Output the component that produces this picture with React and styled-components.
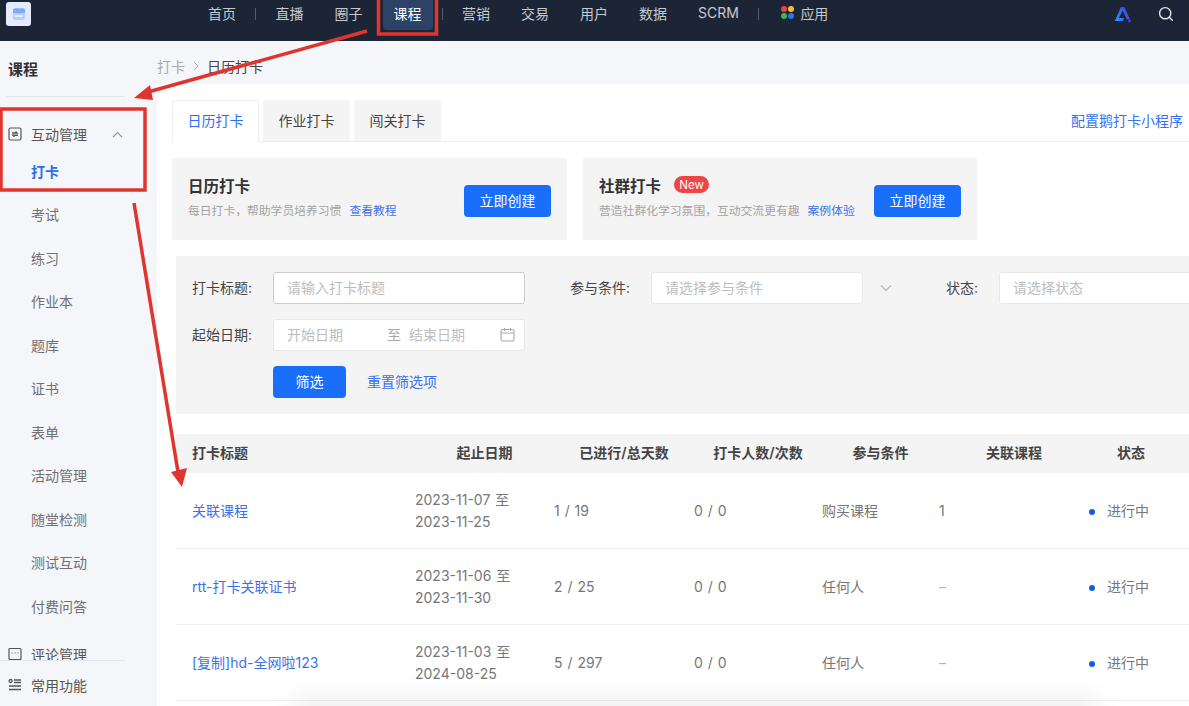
import React from "react";
import styled, { createGlobalStyle } from "styled-components";

const GlobalStyle = createGlobalStyle`
  html, body {
    margin: 0;
    padding: 0;
    width: 1189px;
    height: 706px;
    overflow: hidden;
    background: #fff;
    font-family: Inter, "Noto Sans CJK SC", sans-serif;
    font-size: 14px;
    color: #333;
  }
  * { box-sizing: border-box; }
`;

const Page = styled.div`
  position: relative;
  width: 1189px;
  height: 706px;
  overflow: hidden;
  display: flex;
  flex-direction: column;
`;

const TopBar = styled.header`
  height: 41px;
  flex: none;
  background: #1c2536;
  display: flex;
  align-items: flex-start;
  padding-left: 6px;
`;

const Logo = styled.div`
  width: 25px;
  height: 24px;
  margin-top: 2px;
  border-radius: 3px;
  background: #e3ebfd;
  display: flex;
  align-items: center;
  justify-content: center;
`;

const Nav = styled.nav`
  display: flex;
  align-items: flex-start;
  margin-left: 161.5px;
  flex: 1;
`;

const NavItem = styled.a`
  height: 30px;
  padding: 0 ${(p) => (p.$active ? "11px" : "15.5px")} 5px;
  margin: 0 ${(p) => (p.$active ? "5.5px" : "0")} 0 ${(p) => (p.$active ? "4.5px" : "0")};
  font-size: 14px;
  color: ${(p) => (p.$active ? "#fff" : "#c6c9cf")};
  background: ${(p) => (p.$active ? "#2c4267" : "transparent")};
  border-radius: 0 0 4px 4px;
  display: flex;
  align-items: center;
  gap: 6px;
  white-space: nowrap;
`;

const NavDivider = styled.span`
  width: 1px;
  height: 12px;
  margin: 8px ${(p) => (p.$wide ? "7px" : "4px")} 0 3.5px;
  background: #565e6c;
`;

const TopIcons = styled.div`
  display: flex;
  align-items: center;
  gap: 26px;
  height: 28px;
  padding-right: 15px;
`;

const Body = styled.div`
  flex: 1;
  display: flex;
  min-height: 0;
`;

const Sidebar = styled.aside`
  width: 157px;
  flex: none;
  background: #f5f6fa;
  display: flex;
  flex-direction: column;
`;

const SideTitle = styled.div`
  height: 56px;
  margin: 0 32px 0 6px;
  padding-left: 2px;
  border-bottom: 1px solid #e6e7eb;
  display: flex;
  align-items: center;
  font-size: 15px;
  font-weight: 600;
  color: #333;
`;

const SideScroll = styled.div`
  flex: 1;
  min-height: 0;
  overflow: hidden;
  padding-top: 23px;
`;

const GroupRow = styled.div`
  height: 30px;
  margin-top: ${(p) => p.$gap || 0}px;
  padding: 0 0 2px 8px;
  display: flex;
  align-items: center;
  gap: 9px;
  color: #555;
`;

const Chevron = styled.svg`
  margin-left: 16px;
`;

const SubItem = styled.div`
  height: 43.5px;
  padding: 0 0 2px 31px;
  display: flex;
  align-items: center;
  color: ${(p) => (p.$active ? "#2b6ff0" : "#707070")};
  font-weight: ${(p) => (p.$active ? 600 : 400)};
`;

const SideFooter = styled.div`
  height: 46px;
  flex: none;
  margin-right: 32px;
  padding: 2px 0 0 8px;
  border-top: 1px solid #e6e7eb;
  display: flex;
  align-items: center;
  gap: 9px;
  color: #555;
`;

const Content = styled.main`
  flex: 1;
  min-width: 0;
  display: flex;
  flex-direction: column;
  overflow: hidden;
`;

const Crumbs = styled.div`
  height: 43px;
  flex: none;
  background: #f5f6fa;
  display: flex;
  align-items: center;
  padding-top: 7px;
  gap: 7px;
  color: #aaa;
`;

const CrumbNow = styled.span`
  color: #444;
`;

const Panel = styled.div`
  flex: 1;
  background: #fff;
  padding: 16px 0 0 15px;
`;

const TabBar = styled.div`
  height: 42px;
  display: flex;
  gap: 4px;
  border-bottom: 1px solid #eeeeee;
`;

const Tab = styled.div`
  width: 87px;
  height: ${(p) => (p.$active ? "42px" : "41px")};
  padding-bottom: 2px;
  border-radius: 3px 3px 0 0;
  border: 1px solid ${(p) => (p.$active ? "#eeeeee" : "#f4f4f4")};
  border-bottom: ${(p) => (p.$active ? "1px solid #fff" : "none")};
  background: ${(p) => (p.$active ? "#fff" : "#f4f4f4")};
  color: ${(p) => (p.$active ? "#2b6ff0" : "#444")};
  display: flex;
  align-items: center;
  justify-content: center;
`;

const MiniLink = styled.a`
  margin: 0 6px 2px auto;
  align-self: center;
  color: #3a72ec;
`;

const Cards = styled.div`
  display: flex;
  gap: 16px;
  margin-top: 16px;
`;

const Card = styled.div`
  width: ${(p) => p.$w}px;
  height: 82px;
  background: #f4f4f4;
  padding: 0 16px;
  display: flex;
  align-items: center;
  justify-content: space-between;
`;

const CardText = styled.div`
  margin-bottom: 6px;
`;

const CardTitle = styled.div`
  display: flex;
  align-items: center;
  gap: 13px;
  height: 20px;
  font-size: 15.5px;
  font-weight: 600;
  color: #333;
`;

const Badge = styled.span`
  width: 35px;
  height: 17px;
  border-radius: 9px;
  background: #ee4545;
  color: #fff;
  font-size: 11.5px;
  font-weight: 400;
  display: flex;
  align-items: center;
  justify-content: center;
`;

const CardDesc = styled.div`
  margin-top: 6px;
  font-size: 11.8px;
  color: #a3a3a3;
  display: flex;
  gap: 8px;
  white-space: nowrap;
`;

const SmallLink = styled.a`
  color: #3a72ec;
`;

const Button = styled.button`
  width: ${(p) => p.$w}px;
  height: 32px;
  border: 0;
  border-radius: 4px;
  background: #1a6ffa;
  color: #fff;
  font: inherit;
  font-size: 14px;
  padding: 0 0 2px;
`;

const CardButton = styled(Button)`
  margin-top: 4px;
`;

const Filter = styled.section`
  margin: 16px 0 0 4px;
  height: 158px;
  background: #f4f4f4;
  padding: 16px 0 0 16px;
  overflow: hidden;
`;

const FilterRow = styled.div`
  display: flex;
  align-items: center;
  height: 32px;
  margin-bottom: 15px;
`;

const Label = styled.span`
  width: ${(p) => p.$w}px;
  margin-left: ${(p) => p.$gap || 0}px;
  margin-bottom: 2px;
  flex: none;
  color: #444;
  white-space: nowrap;
`;

const Field = styled.div`
  width: ${(p) => p.$w}px;
  flex: none;
  height: 32px;
  background: #fff;
  border: 1px solid ${(p) => (p.$strong ? "#cccccc" : "#e8e8e8")};
  border-radius: 3px;
  padding: 0 12px 3px 13px;
  display: flex;
  align-items: center;
  color: #bdbdbd;
  white-space: nowrap;
`;

const RangeTo = styled.span`
  margin: 0 8px 0 44px;
  color: #a8a8a8;
`;

const FieldIcon = styled.svg`
  margin: 2px -3px 0 auto;
`;

const Arrow = styled.svg`
  margin: 0 54px 0 17px;
  flex: none;
`;

const FilterActions = styled.div`
  display: flex;
  align-items: center;
  height: 32px;
  margin: 1px 0 0 81px;
  gap: 21px;
`;

const TextLink = styled.a`
  margin-bottom: 3px;
  color: #3a72ec;
`;

const Table = styled.section`
  margin: 20px 0 0 4px;
`;

const Row = styled.div`
  display: grid;
  grid-template-columns: 223px 139px 140px 128px 117px 150px 100px;
  align-items: center;
  height: ${(p) => (p.$head ? "39px" : "76px")};
  background: ${(p) => (p.$head ? "#f4f4f4" : "#fff")};
  border-bottom: ${(p) => (p.$head ? "none" : "1px solid #eeeeee")};
`;

const HeadCell = styled.div`
  padding: 0 0 3px ${(p) => (p.$edge ? "16px" : "32px")};
  font-weight: 600;
  color: #444;
  white-space: nowrap;
  text-align: ${(p) => (p.$left ? "left" : "center")};
`;

const Cell = styled.div`
  padding-left: 16px;
  color: ${(p) => (p.$muted ? "#b5b5b5" : "#777")};
  line-height: 22px;
  white-space: nowrap;
  word-spacing: 1px;
`;

const TitleLink = styled.a`
  color: #3a72ec;
  word-spacing: 0;
`;

const Status = styled.div`
  padding: 0 0 1px 16px;
  display: flex;
  align-items: center;
  gap: 12px;
  color: #777;
  white-space: nowrap;
`;

const Dot = styled.i`
  width: 6px;
  height: 6px;
  border-radius: 50%;
  background: #1658ee;
  margin-top: 3px;
`;

const FloatingShadow = styled.div`
  position: absolute;
  left: 300px;
  bottom: -14px;
  width: 790px;
  height: 14px;
  box-shadow: 0 0 28px 8px rgba(0, 0, 0, 0.07);
`;

const Annotations = styled.svg`
  position: absolute;
  left: 0;
  top: 0;
  pointer-events: none;
`;

const subItems = ["考试", "练习", "作业本", "题库", "证书", "表单", "活动管理", "随堂检测", "测试互动", "付费问答"];

const rows = [
  { title: "关联课程", from: "2023-11-07 至", to: "2023-11-25", days: "1 / 19", cond: "购买课程", course: "1" },
  { title: "rtt-打卡关联证书", from: "2023-11-06 至", to: "2023-11-30", days: "2 / 25", cond: "任何人", course: "–" },
  { title: "[复制]hd-全网啦123", from: "2023-11-03 至", to: "2024-08-25", days: "5 / 297", cond: "任何人", course: "–" },
];

function NavLinks() {
  return (
    <Nav>
      <NavItem>首页</NavItem>
      <NavDivider />
      <NavItem>直播</NavItem>
      <NavItem>圈子</NavItem>
      <NavItem $active>课程</NavItem>
      <NavDivider />
      <NavItem>营销</NavItem>
      <NavItem>交易</NavItem>
      <NavItem>用户</NavItem>
      <NavItem>数据</NavItem>
      <NavItem>SCRM</NavItem>
      <NavDivider $wide />
      <NavItem>
        <svg width="13" height="13" viewBox="0 0 13 13">
          <circle cx="3" cy="3" r="3" fill="#e8483a" />
          <circle cx="10" cy="3" r="3" fill="#f6c02c" />
          <circle cx="3" cy="10" r="3" fill="#3fb45a" />
          <circle cx="10" cy="10" r="3" fill="#2f74ec" />
        </svg>
        应用
      </NavItem>
    </Nav>
  );
}

export default function App() {
  return (
    <Page>
      <GlobalStyle />
      <TopBar>
        <Logo>
          <svg width="16" height="16" viewBox="0 0 16 16">
            <rect x="2" y="2" width="12" height="12" rx="2" fill="#b5cefc" />
            <path d="M2 4.5a2 2 0 0 1 2-2h8a2 2 0 0 1 2 2V7H2z" fill="#7fa9f5" />
            <rect x="4" y="9" width="8" height="2" fill="#e3ebfd" />
          </svg>
        </Logo>
        <NavLinks />
        <TopIcons>
          <svg width="18" height="17" viewBox="0 0 18 17">
            <defs>
              <linearGradient id="brand" x1="0" y1="1" x2="1" y2="0.4">
                <stop offset="0" stopColor="#2a9bf5" />
                <stop offset="0.55" stopColor="#2f6cf0" />
                <stop offset="1" stopColor="#5a35d8" />
              </linearGradient>
            </defs>
            <path d="M7 1h3.4L16 13.2h-3.2L8.7 4.6 4.8 12h5.4l-1.2 3H.8z" fill="url(#brand)" />
            <circle cx="15.4" cy="15" r="1.5" fill="#5a35d8" />
          </svg>
          <svg width="16" height="16" viewBox="0 0 16 16" fill="none" stroke="#e6e8ec" strokeWidth="1.4">
            <circle cx="7.2" cy="7.2" r="5.6" />
            <path d="M11.3 11.3l3 3" strokeLinecap="round" />
          </svg>
        </TopIcons>
      </TopBar>
      <Body>
        <Sidebar>
          <SideTitle>课程</SideTitle>
          <SideScroll>
            <GroupRow>
              <svg width="14" height="14" viewBox="0 0 14 14" fill="none" stroke="#555" strokeWidth="1.2">
                <rect x="1" y="1" width="12" height="12" rx="1.5" />
                <path d="M4 6h5l-1.5-1.6M10 8.2H5l1.5 1.6" strokeWidth="1.5" />
              </svg>
              互动管理
              <Chevron width="11" height="7" viewBox="0 0 11 7" fill="none" stroke="#999" strokeWidth="1.1">
                <path d="M1 6l4.5-4.5L10 6" />
              </Chevron>
            </GroupRow>
            <SubItem $active>打卡</SubItem>
            {subItems.map((name) => (
              <SubItem key={name}>{name}</SubItem>
            ))}
            <GroupRow $gap={11.5}>
              <svg width="14" height="14" viewBox="0 0 14 14" fill="none" stroke="#555" strokeWidth="1.2">
                <rect x="1" y="1.5" width="12" height="11" rx="1" />
                <path d="M3.5 6h1M6.5 6h1M9.5 6h1" />
              </svg>
              评论管理
            </GroupRow>
          </SideScroll>
          <SideFooter>
            <svg width="14" height="14" viewBox="0 0 14 14" fill="none" stroke="#555" strokeWidth="1.3">
              <circle cx="2.6" cy="3" r="1.5" />
              <path d="M6 2h7M6 4.5h7M1 8h12M1 11.5h12" />
            </svg>
            常用功能
          </SideFooter>
        </Sidebar>
        <Content>
          <Crumbs>
            <span>打卡</span>
            <svg width="8" height="10" viewBox="0 0 8 10" fill="none" stroke="#aaa" strokeWidth="1">
              <path d="M2 1l4 4-4 4" />
            </svg>
            <CrumbNow>日历打卡</CrumbNow>
          </Crumbs>
          <Panel>
            <TabBar>
              <Tab $active>日历打卡</Tab>
              <Tab>作业打卡</Tab>
              <Tab>闯关打卡</Tab>
              <MiniLink>配置鹅打卡小程序</MiniLink>
            </TabBar>
            <Cards>
              <Card $w={395}>
                <CardText>
                  <CardTitle>日历打卡</CardTitle>
                  <CardDesc>
                    每日打卡，帮助学员培养习惯
                    <SmallLink>查看教程</SmallLink>
                  </CardDesc>
                </CardText>
                <CardButton $w={87}>立即创建</CardButton>
              </Card>
              <Card $w={394}>
                <CardText>
                  <CardTitle>
                    社群打卡
                    <Badge>New</Badge>
                  </CardTitle>
                  <CardDesc>
                    营造社群化学习氛围，互动交流更有趣
                    <SmallLink>案例体验</SmallLink>
                  </CardDesc>
                </CardText>
                <CardButton $w={87}>立即创建</CardButton>
              </Card>
            </Cards>
            <Filter>
              <FilterRow>
                <Label $w={81}>打卡标题:</Label>
                <Field $w={252} $strong>请输入打卡标题</Field>
                <Label $w={81} $gap={45}>参与条件:</Label>
                <Field $w={212}>请选择参与条件</Field>
                <Arrow width="12" height="8" viewBox="0 0 12 8" fill="none" stroke="#b5b5b5" strokeWidth="1.2">
                  <path d="M1 1.5l5 5 5-5" />
                </Arrow>
                <Label $w={53}>状态:</Label>
                <Field $w={240}>请选择状态</Field>
              </FilterRow>
              <FilterRow>
                <Label $w={81}>起始日期:</Label>
                <Field $w={252}>
                  开始日期
                  <RangeTo>至</RangeTo>
                  结束日期
                  <FieldIcon width="15" height="15" viewBox="0 0 15 15" fill="none" stroke="#a8a8a8" strokeWidth="1.1">
                    <rect x="1" y="2.5" width="13" height="11.5" rx="1.5" />
                    <path d="M1 6h13M4.5 1v3M10.5 1v3" />
                  </FieldIcon>
                </Field>
              </FilterRow>
              <FilterActions>
                <Button $w={73}>筛选</Button>
                <TextLink>重置筛选项</TextLink>
              </FilterActions>
            </Filter>
            <Table>
              <Row $head>
                <HeadCell $left $edge>打卡标题</HeadCell>
                <HeadCell>起止日期</HeadCell>
                <HeadCell>已进行/总天数</HeadCell>
                <HeadCell>打卡人数/次数</HeadCell>
                <HeadCell>参与条件</HeadCell>
                <HeadCell>关联课程</HeadCell>
                <HeadCell $edge>状态</HeadCell>
              </Row>
              {rows.map((row) => (
                <Row key={row.title}>
                  <Cell>
                    <TitleLink>{row.title}</TitleLink>
                  </Cell>
                  <Cell>
                    {row.from}
                    <br />
                    {row.to}
                  </Cell>
                  <Cell>{row.days}</Cell>
                  <Cell>0 / 0</Cell>
                  <Cell>{row.cond}</Cell>
                  <Cell $muted={row.course === "–"}>{row.course}</Cell>
                  <Status>
                    <Dot />
                    进行中
                  </Status>
                </Row>
              ))}
            </Table>
          </Panel>
        </Content>
      </Body>
      <FloatingShadow />
      <Annotations width="1189" height="706" viewBox="0 0 1189 706">
        <g fill="none" stroke="#e0352f" strokeWidth="3.5">
          <rect x="378.5" y="-6" width="58" height="40" />
          <rect x="1" y="109" width="144" height="81" />
          <path d="M367 31L148 92" />
          <path d="M134 203L178 472" />
        </g>
        <path d="M134 98L150 85L153 100z" fill="#e0352f" />
        <path d="M182 487L171 472L187 468z" fill="#e0352f" />
      </Annotations>
    </Page>
  );
}
